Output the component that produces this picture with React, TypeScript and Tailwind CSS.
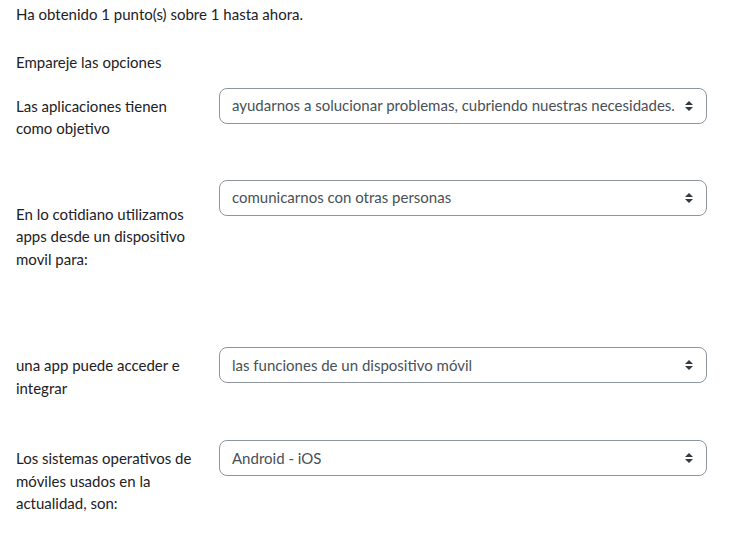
const Caret = () => (
  <svg width="8" height="10" viewBox="0 0 4 5" className="shrink-0">
    <path d="M2 0L0 2h4zm0 5L0 3h4z" fill="#343a40" />
  </svg>
);

const Select = ({ value }: { value: string }) => (
  <div className="w-[488px] h-9 shrink-0 border border-[#8f959e] rounded-[0.5rem] bg-white flex items-center justify-between pl-3 pr-[13px] text-[#495057]">
    <span className="whitespace-nowrap">{value}</span>
    <Caret />
  </div>
);

const rows = [
  {
    label: "Las aplicaciones tienen como objetivo",
    value: "ayudarnos a solucionar problemas, cubriendo nuestras necesidades.",
    labelTop: "mt-[7px]",
    gap: "mb-[40px]",
  },
  {
    label: "En lo cotidiano utilizamos apps desde un dispositivo movil para:",
    value: "comunicarnos con otras personas",
    labelTop: "mt-[23px]",
    gap: "mb-[77px]",
  },
  {
    label: "una app puede acceder e integrar",
    value: "las funciones de un dispositivo móvil",
    labelTop: "mt-[7px]",
    gap: "mb-[41px]",
  },
  {
    label: "Los sistemas operativos de móviles usados en la actualidad, son:",
    value: "Android - iOS",
    labelTop: "mt-[7px]",
    gap: "mb-0",
  },
];

export default function App() {
  return (
    <div className="min-h-[542px] bg-white px-4 pt-[3px] text-[15px] leading-[22.5px] text-[#1d2125] font-['Lato','Liberation_Sans',sans-serif]">
      <p>Ha obtenido 1 punto(s) sobre 1 hasta ahora.</p>
      <p className="mt-[25.5px]">Empareje las opciones</p>
      <div className="mt-[14px]">
        {rows.map((row, i) => (
          <div key={i} className={`flex items-start gap-[18px] ${row.gap}`}>
            <div className={`w-[185px] shrink-0 ${row.labelTop}`}>{row.label}</div>
            <Select value={row.value} />
          </div>
        ))}
      </div>
    </div>
  );
}
